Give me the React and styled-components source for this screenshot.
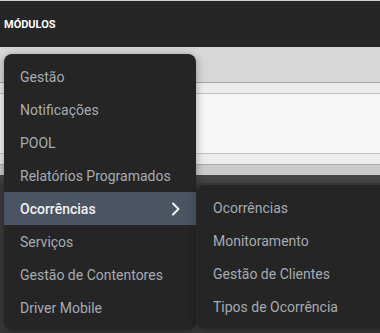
import React from "react";
import styled, { createGlobalStyle } from "styled-components";

const Global = createGlobalStyle`
  html, body { margin: 0; padding: 0; }
  body { width: 380px; height: 333px; overflow: hidden; background: #3a3a3a; font-family: Roboto, "Liberation Sans", sans-serif; }
`;

const Page = styled.div`
  position: relative;
  width: 380px;
  height: 333px;
  overflow: hidden;
  background: #3a3a3a;
`;

const Header = styled.header`
  height: 46px;
  border-top: 1px solid #cfcfcf;
  background: #262626;
  display: flex;
  align-items: center;
  padding-left: 4px;
  color: #ffffff;
  font-size: 11px;
  font-weight: 700;
  letter-spacing: 0;
`;

const Band = styled.div`
  height: ${(p) => p.$h}px;
  background: ${(p) => p.$bg};
  border-bottom: ${(p) => (p.$line ? `1px solid ${p.$line}` : "none")};
`;

const Menu = styled.ul`
  position: absolute;
  left: ${(p) => p.$left}px;
  top: ${(p) => p.$top}px;
  width: ${(p) => p.$width}px;
  margin: 0;
  padding: 6px 0;
  list-style: none;
  background: #252525;
  border-radius: 8px;
  box-shadow: 0 2px 10px rgba(0, 0, 0, 0.35);
`;

const Item = styled.li`
  height: 33px;
  display: flex;
  align-items: center;
  justify-content: space-between;
  padding: 0 16px;
  font-size: 14px;
  color: ${(p) => (p.$active ? "#f2f2f2" : "#a6abb3")};
  font-weight: ${(p) => (p.$active ? 500 : 400)};
  background: ${(p) => (p.$active ? "#4a5462" : "transparent")};
  white-space: nowrap;
`;

const Chevron = () => (
  <svg width="10" height="14" viewBox="0 0 10 14" fill="none" style={{ marginRight: -1 }}>
    <path d="M2 1.5 L7.5 7 L2 12.5" stroke="#f2f2f2" strokeWidth="2" strokeLinecap="round" strokeLinejoin="round" />
  </svg>
);

const main = [
  "Gestão",
  "Notificações",
  "POOL",
  "Relatórios Programados",
  "Ocorrências",
  "Serviços",
  "Gestão de Contentores",
  "Driver Mobile",
];

const sub = ["Ocorrências", "Monitoramento", "Gestão de Clientes", "Tipos de Ocorrência"];

export default function App() {
  return (
    <Page>
      <Global />
      <Header>MÓDULOS</Header>
      <Band $h={35} $bg="#d7d7d7" $line="#a9a9a9" />
      <Band $h={10} $bg="#ececec" $line="#c2c2c2" />
      <Band $h={59} $bg="#f6f6f6" $line="#c6c6c6" />
      <Band $h={10} $bg="#ececec" $line="#a9a9a9" />
      <Band $h={10} $bg="#cacaca" />
      <Band $h={8} $bg="#444444" />
      <Menu $left={4} $top={54} $width={192}>
        {main.map((m) => (
          <Item key={m} $active={m === "Ocorrências"}>
            {m}
            {m === "Ocorrências" && <Chevron />}
          </Item>
        ))}
      </Menu>
      <Menu $left={197} $top={185} $width={200}>
        {sub.map((m) => (
          <Item key={m}>{m}</Item>
        ))}
      </Menu>
    </Page>
  );
}
